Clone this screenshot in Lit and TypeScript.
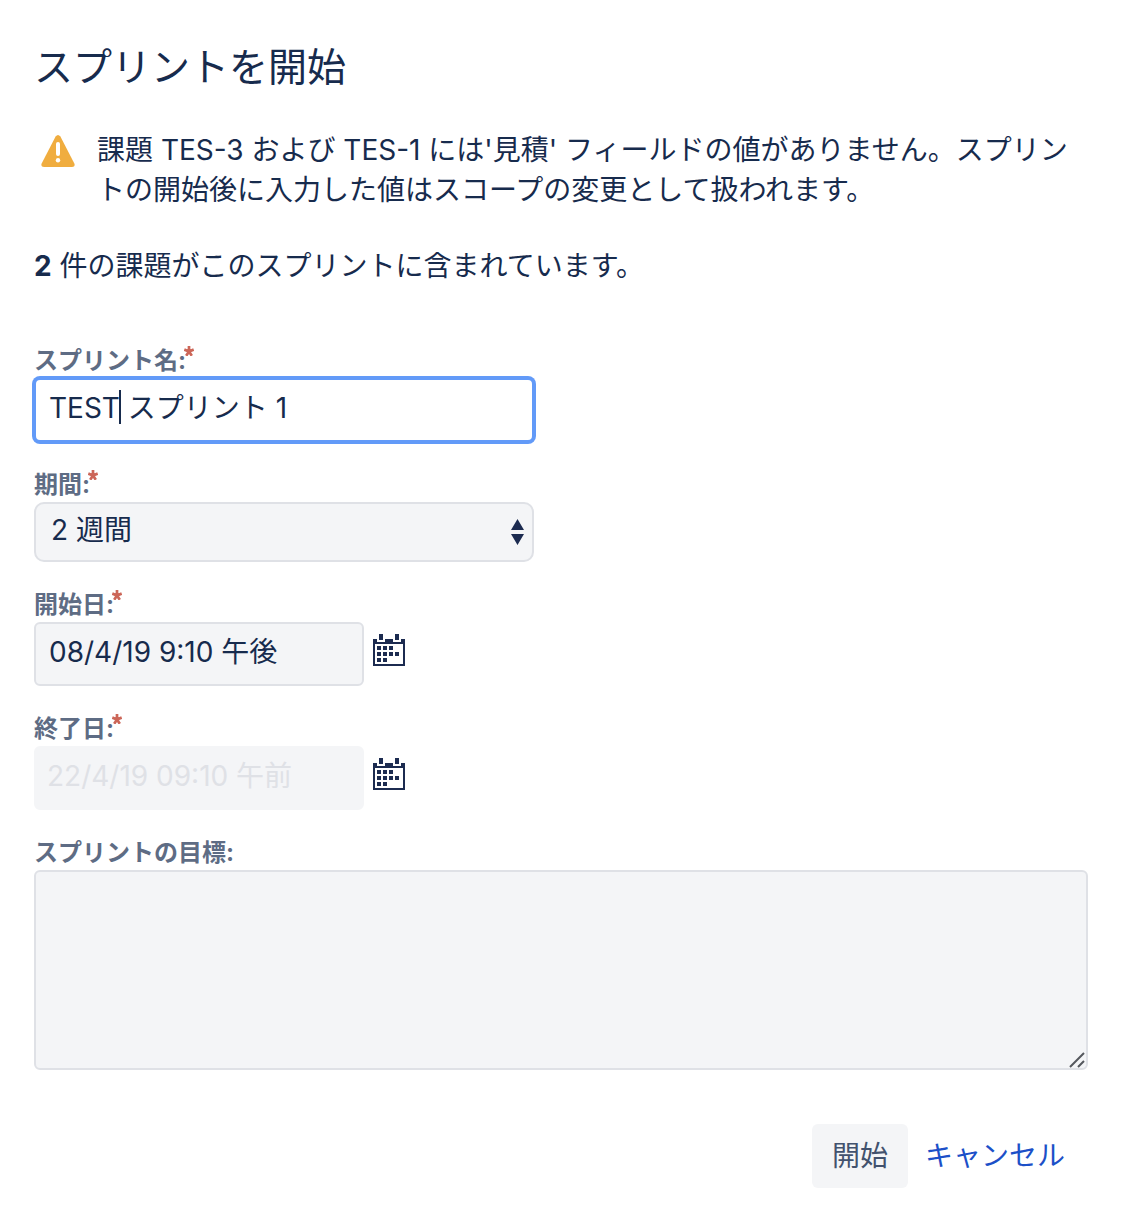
import { LitElement, html, css, svg } from "lit";
import { customElement, state } from "lit/decorators.js";

const warningIcon = html`
  <svg class="warning-icon" viewBox="0 0 34 32" width="34" height="32" role="img" aria-label="警告">
    <path
      d="M14.6 1.6Q17 -1.6 19.4 1.6L33.2 28.2Q34.8 31.8 31 32H3Q-0.8 31.8 0.8 28.2Z"
      fill="#f0ad3f"
    />
    <rect x="15" y="7" width="4" height="14" rx="2" fill="#fff" />
    <circle cx="17" cy="25.2" r="2.2" fill="#fff" />
  </svg>
`;

const dots: Array<[number, number]> = [
  [4, 12], [10, 12], [16, 12],
  [4, 18], [10, 18], [16, 18], [22, 18],
  [4, 24], [10, 24],
];

const calendarIcon = html`
  <svg viewBox="0 0 32 32" width="32" height="32" fill="#1c2b50" aria-hidden="true">
    <path d="M0 5H4V8H12V5H20V8H28V5H32V32H0ZM2 10V30H30V10Z" fill-rule="evenodd" />
    <rect x="6" y="0" width="4" height="6" />
    <rect x="22" y="0" width="4" height="6" />
    ${dots.map(([x, y]) => svg`<rect x=${x} y=${y} width="4" height="4" />`)}
  </svg>
`;

const requiredMark = html`
  <svg class="required" viewBox="0 0 10 10" width="10" height="10" role="img" aria-label="必須">
    <path
      d="M5 0V5.500M0.3 3.6L5 5.500M9.700 3.6L5 5.500M2.200 9.800L5 5.500M7.800 9.800L5 5.500"
      stroke="#cc6658"
      stroke-width="2.7"
      fill="none"
    />
  </svg>
`;

@customElement("app-root")
export class AppRoot extends LitElement {
  @state() private sprintName = "TEST スプリント 1";
  @state() private startDate = "08/4/19 9:10 午後";
  @state() private endDate = "22/4/19 09:10 午前";

  static styles = css`
    :host {
      display: block;
      background: #fff;
      color: #172b4d;
      font-family: Inter, "Noto Sans CJK JP", sans-serif;
      font-size: 28px;
      line-height: 40px;
    }
    * {
      box-sizing: border-box;
    }
    .dialog {
      padding: 43px 36px 28px 34px;
    }
    .title {
      margin: 0;
      font-size: 39px;
      line-height: 48px;
      font-weight: 400;
    }
    .notice {
      display: flex;
      gap: 22px;
      margin-top: 39px;
      padding: 0 16px 0 7px;
    }
    .warning-icon {
      flex: none;
      margin-top: 5px;
    }
    .notice-text,
    .summary {
      margin: 0;
    }
    .summary {
      margin-top: 36px;
    }
    .form {
      display: flex;
      flex-direction: column;
      gap: 26px;
      margin-top: 58px;
    }
    .label {
      display: flex;
      align-items: flex-start;
      height: 34px;
      font-size: 24px;
      line-height: 34px;
      font-weight: 700;
      color: #5e6c84;
    }
    .required {
      flex: none;
      margin: 2px 0 0 -2px;
    }
    .control {
      display: block;
      width: 100%;
      height: 64px;
      margin: 0;
      padding: 0 13px 8px;
      border: 2px solid #dfe1e6;
      border-radius: 6px;
      background: #f4f5f7;
      color: #172b4d;
      font: inherit;
      outline: none;
    }
    .medium {
      position: relative;
      max-width: 500px;
    }
    .active {
      background: #fff;
      border-color: #629af8;
      box-shadow: 0 0 0 2px #629af8;
      caret-color: transparent;
    }
    .caret {
      position: absolute;
      left: 85px;
      top: 12px;
      width: 2px;
      height: 34px;
      background: #172b4d;
      pointer-events: none;
    }
    .select {
      height: 60px;
      padding: 0 40px 4px 15px;
      border-radius: 10px;
      appearance: none;
    }
    .arrows {
      position: absolute;
      right: 10px;
      top: 17px;
      pointer-events: none;
    }
    .date-row {
      display: flex;
      align-items: center;
      gap: 9px;
    }
    .date {
      width: 330px;
    }
    .date:disabled {
      border-color: #f4f5f7;
      padding-left: 11px;
      color: #dfe1e6;
      opacity: 1;
    }
    .icon-button {
      display: flex;
      margin: 0 0 8px;
      padding: 0;
      border: 0;
      background: none;
      cursor: pointer;
    }
    .goal {
      position: relative;
    }
    .textarea {
      height: 200px;
      padding: 10px 14px;
      resize: vertical;
    }
    .textarea::-webkit-resizer {
      background: transparent;
    }
    .grip {
      position: absolute;
      right: 3px;
      bottom: 2px;
      pointer-events: none;
    }
    .actions {
      display: flex;
      justify-content: flex-end;
      align-items: center;
      gap: 17px;
      margin-top: 54px;
      padding-right: 23px;
    }
    .submit {
      height: 64px;
      padding: 0 20px;
      border: 0;
      border-radius: 6px;
      background: #f4f5f7;
      color: #42526e;
      font: inherit;
    }
    .cancel {
      color: #1c50c8;
      text-decoration: none;
    }
  `;

  render() {
    return html`
      <main class="dialog">
        <h1 class="title">スプリントを開始</h1>
        <div class="notice">
          ${warningIcon}
          <p class="notice-text">課題 TES-3 および TES-1 には'見積' フィールドの値がありません。スプリントの開始後に入力した値はスコープの変更として扱われます。</p>
        </div>
        <p class="summary"><strong>2</strong> 件の課題がこのスプリントに含まれています。</p>

        <form class="form" @submit=${(e: Event) => e.preventDefault()}>
          <div>
            <label class="label" for="name">スプリント名:${requiredMark}</label>
            <div class="medium">
              <input id="name" class="control active" type="text" required .value=${this.sprintName} />
              <span class="caret"></span>
            </div>
          </div>
          <div>
            <label class="label" for="duration">期間:${requiredMark}</label>
            <div class="medium">
              <select id="duration" class="control select" required>
                <option selected>2 週間</option>
              </select>
              <svg class="arrows" viewBox="0 0 13 26" width="13" height="26" fill="#1c2b50" aria-hidden="true">
                <path d="M6.500 0L13 11H0ZM0 15H13L6.500 26Z" />
              </svg>
            </div>
          </div>
          <div>
            <label class="label" for="start">開始日:${requiredMark}</label>
            <div class="date-row">
              <input id="start" class="control date" type="text" required .value=${this.startDate} />
              <button class="icon-button" type="button" aria-label="開始日を選択">${calendarIcon}</button>
            </div>
          </div>
          <div>
            <label class="label" for="end">終了日:${requiredMark}</label>
            <div class="date-row">
              <input id="end" class="control date" type="text" disabled .value=${this.endDate} />
              <button class="icon-button" type="button" aria-label="終了日を選択">${calendarIcon}</button>
            </div>
          </div>
          <div>
            <label class="label" for="goal">スプリントの目標:</label>
            <div class="goal">
              <textarea id="goal" class="control textarea"></textarea>
              <svg class="grip" viewBox="0 0 16 16" width="16" height="16" aria-hidden="true">
                <path d="M1 15L15 1M9 15L15 9" stroke="#55585e" stroke-width="2" />
              </svg>
            </div>
          </div>
        </form>

        <div class="actions">
          <button class="submit" type="button">開始</button>
          <a class="cancel" href="#">キャンセル</a>
        </div>
      </main>
    `;
  }
}
